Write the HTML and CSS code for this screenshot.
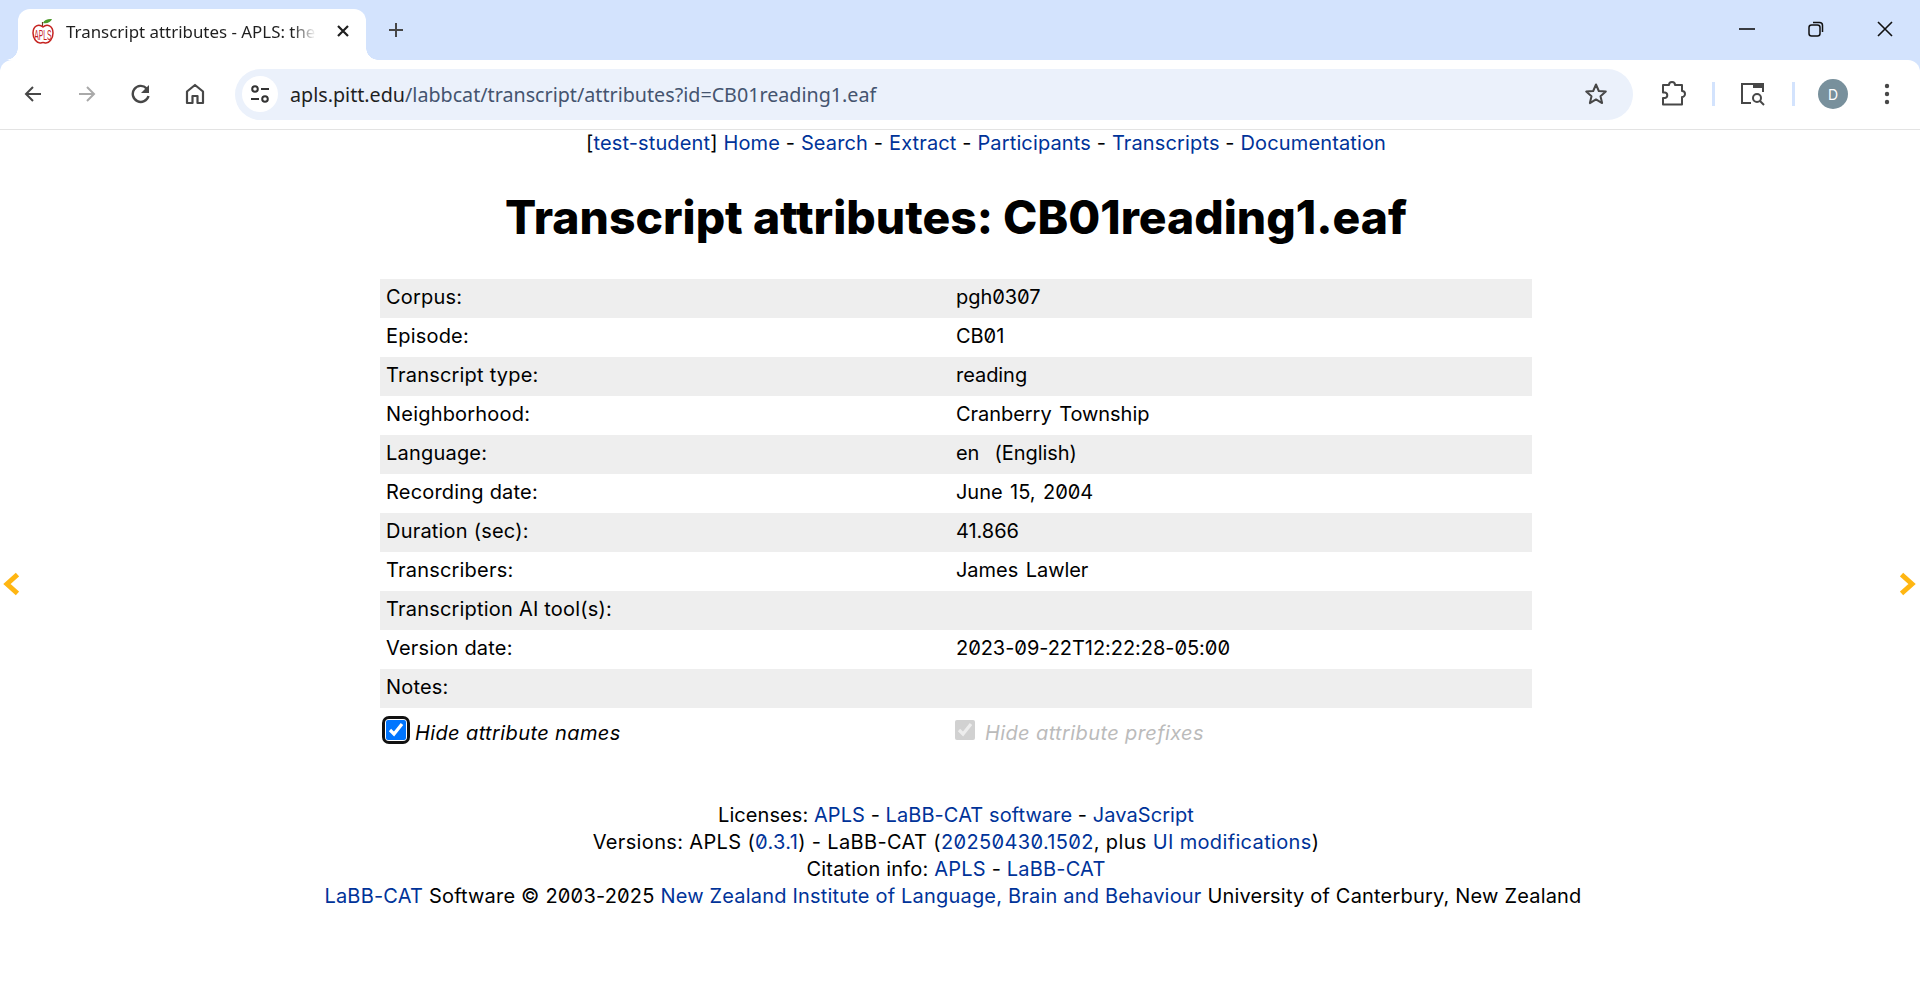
FILE: index.html
```html
<!DOCTYPE html>
<html lang="en">
<head>
    <meta charset="UTF-8">
    <title>Transcript attributes - APLS</title>
    <link rel="stylesheet" href="styles.css">
</head>
<body>
    <div class="tabstrip">
        <div class="tab">
            <svg class="favicon" width="24" height="26" viewBox="0 0 24 26" fill="none">
                <path d="M12 9C8 5.500 2 7.500 2 15c0 6 4 10 7 10 1.300 0 2-.5 3-.5s1.700.5 3 .5c3 0 7-4 7-10 0-7.500-6-9.500-10-6z" stroke="#c5221f" stroke-width="1.500"/>
                <text class="favicon-text" x="17.600" y="15.700" text-anchor="middle" transform="scale(.68 1.4)">APLS</text>
                <path d="M11.500 8V4" stroke="#6b3d1e" stroke-width="1.200"/>
                <path d="M12 5c1-3 5-4.500 9-4-1 3-5 5-9 4z" fill="#4c9a2a"/>
            </svg>
            <span class="tab-title">Transcript attributes - APLS: the</span>
            <svg class="tab-close" width="14" height="14" viewBox="0 0 14 14"><path d="M2 2l10 10M12 2L2 12" stroke="#1f1f1f" stroke-width="2.200"/></svg>
        </div>
        <svg class="new-tab" width="18" height="18" viewBox="0 0 18 18"><path d="M9 2v14M2 9h14" stroke="#474747" stroke-width="2"/></svg>
        <div class="window-controls">
            <svg width="16" height="16" viewBox="0 0 16 16"><path d="M0 8h16" stroke="#111" stroke-width="1.600"/></svg>
            <svg width="16" height="16" viewBox="0 0 16 16" fill="none"><rect x="1" y="4" width="11" height="11" rx="2.500" stroke="#111" stroke-width="1.500"/><path d="M5 1.500h6.500A3 3 0 0 1 14.500 4.500V11" stroke="#111" stroke-width="1.500"/></svg>
            <svg width="16" height="16" viewBox="0 0 16 16"><path d="M1 1l14 14M15 1L1 15" stroke="#111" stroke-width="1.600"/></svg>
        </div>
    </div>
    <div class="toolbar">
        <div class="nav-buttons">
            <svg width="20" height="20" viewBox="0 0 20 20" fill="none"><path d="M18 10H3M10 3l-7 7 7 7" stroke="#474747" stroke-width="2"/></svg>
            <svg width="20" height="20" viewBox="0 0 20 20" fill="none"><path d="M2 10h15M10 3l7 7-7 7" stroke="#a9a9a9" stroke-width="2"/></svg>
            <svg width="20" height="20" viewBox="0 0 20 20" fill="none"><path d="M17.500 12A8 8 0 1 1 15.500 4.300" stroke="#474747" stroke-width="2.400"/><path d="M18 1v8h-8z" fill="#474747"/></svg>
            <svg width="20" height="22" viewBox="0 0 20 22" fill="none"><path d="M2 20V8.500L10 2l8 6.500V20h-5.500v-7h-5v7z" stroke="#474747" stroke-width="2.200" stroke-linejoin="round"/></svg>
        </div>
        <div class="omnibox">
            <span class="site-info">
                <svg width="20" height="18" viewBox="0 0 20 18" fill="none"><circle cx="5" cy="4" r="2.800" stroke="#333" stroke-width="2"/><path d="M11 4h8M1 14h8" stroke="#333" stroke-width="2"/><circle cx="15" cy="14" r="2.800" stroke="#333" stroke-width="2"/></svg>
            </span>
            <span class="url"><span class="url-host">apls.pitt.edu</span>/labbcat/transcript/attributes?id=CB01reading1.eaf</span>
            <svg class="star" width="24" height="24" viewBox="0 0 24 24" fill="none"><path d="M12 2.500l2.800 6.500 7 .6-5.300 4.600 1.600 6.900-6.100-3.700-6.100 3.700 1.600-6.900-5.300-4.600 7-.6z" stroke="#474747" stroke-width="2" stroke-linejoin="round"/></svg>
        </div>
        <div class="toolbar-right">
            <svg class="ext" width="26" height="26" viewBox="0 0 26 26" fill="none"><path d="M3 3.500h6a3 3 0 0 1 6 0h7v6a3 3 0 0 1 0 6v7.500H3v-6.500h2a2.800 2.800 0 0 0 0-5.500H3z" transform="translate(0 .5)" stroke="#474747" stroke-width="2" stroke-linejoin="round"/></svg>
            <span class="divider"></span>
            <svg class="lens" width="26" height="26" viewBox="0 0 26 26" fill="none"><path d="M11 22H2V3h21v8" stroke="#474747" stroke-width="2"/><rect x="13" y="2" width="11" height="5" fill="#474747"/><circle cx="17" cy="17" r="4" stroke="#474747" stroke-width="2"/><path d="M20 20l4 4" stroke="#474747" stroke-width="2"/></svg>
            <span class="divider"></span>
            <span class="avatar">D</span>
            <svg class="menu" width="6" height="22" viewBox="0 0 6 22"><circle cx="3" cy="3" r="2.200" fill="#474747"/><circle cx="3" cy="11" r="2.200" fill="#474747"/><circle cx="3" cy="19" r="2.200" fill="#474747"/></svg>
        </div>
    </div>

    <div class="page">
        <div class="side-arrow left"><svg width="16" height="24" viewBox="0 0 16 24"><path d="M14.500 2.500L4 12l10.500 9.500" fill="none" stroke="#ffb612" stroke-width="5"/></svg></div>
        <div class="side-arrow right"><svg width="16" height="24" viewBox="0 0 16 24"><path d="M1.500 2.500L12 12 1.500 21.500" fill="none" stroke="#ffb612" stroke-width="5"/></svg></div>

        <nav class="top-links">
            [<a href="#">test-student</a>] <a href="#">Home</a> - <a href="#">Search</a> - <a href="#">Extract</a> - <a href="#">Participants</a> - <a href="#">Transcripts</a> - <a href="#">Documentation</a>
        </nav>
        <h1>Transcript attributes: CB01reading1.eaf</h1>

        <table class="attributes">
            <tr><td>Corpus:</td><td>pgh0307</td></tr>
            <tr><td>Episode:</td><td>CB01</td></tr>
            <tr><td>Transcript type:</td><td>reading</td></tr>
            <tr><td>Neighborhood:</td><td>Cranberry Township</td></tr>
            <tr><td>Language:</td><td>en &nbsp;(English)</td></tr>
            <tr><td>Recording date:</td><td>June 15, 2004</td></tr>
            <tr><td>Duration (sec):</td><td>41.866</td></tr>
            <tr><td>Transcribers:</td><td>James Lawler</td></tr>
            <tr><td>Transcription AI tool(s):</td><td></td></tr>
            <tr><td>Version date:</td><td>2023-09-22T12:22:28-05:00</td></tr>
            <tr><td>Notes:</td><td></td></tr>
        </table>

        <div class="options">
            <label class="option first"><span class="focus-ring"><input type="checkbox" checked></span> Hide attribute names</label>
            <label class="option disabled"><input type="checkbox" checked disabled> Hide attribute prefixes</label>
        </div>

        <footer>
            <div>Licenses: <a href="#">APLS</a> - <a href="#">LaBB-CAT software</a> - <a href="#">JavaScript</a></div>
            <div>Versions: APLS (<a href="#">0.3.1</a>) - LaBB-CAT (<a href="#">20250430.1502</a>, plus <a href="#">UI modifications</a>)</div>
            <div>Citation info: <a href="#">APLS</a> - <a href="#">LaBB-CAT</a></div>
            <div><a href="#">LaBB-CAT</a> Software © 2003-2025 <a href="#">New Zealand Institute of Language, Brain and Behaviour</a> University of Canterbury, New Zealand</div>
        </footer>
    </div>
</body>
</html>
```

FILE: styles.css
```css
* {
    box-sizing: border-box;
}
body {
    margin: 0;
    height: 1008px;
    overflow: hidden;
    background-color: #d3e3fd;
    font-family: Inter, "Liberation Sans", sans-serif;
    font-feature-settings: "zero";
    color: #000;
}
a {
    color: #003399;
    text-decoration: none;
}

/* browser chrome */
.tabstrip {
    display: flex;
    align-items: flex-start;
    height: 60px;
    font-family: "Noto Sans", sans-serif;
    font-feature-settings: normal;
}
.tab {
    position: relative;
    display: flex;
    align-items: center;
    width: 348px;
    height: 51px;
    margin: 9px 0 0 18px;
    padding: 0 16px 7px 13px;
    background-color: #fff;
    border-radius: 12px 12px 0 0;
}
.tab::before,
.tab::after {
    content: "";
    position: absolute;
    bottom: 0;
    width: 12px;
    height: 12px;
}
.tab::before {
    left: -12px;
    background: radial-gradient(circle at 0 0, transparent 11.500px, #fff 12px);
}
.tab::after {
    right: -12px;
    background: radial-gradient(circle at 100% 0, transparent 11.500px, #fff 12px);
}
.favicon {
    flex: none;
    margin-right: 11px;
    overflow: visible;
}
.favicon-text {
    font-family: "Liberation Sans", sans-serif;
    font-size: 10px;
    fill: #c5221f;
}
.tab-title {
    flex: 1;
    overflow: hidden;
    white-space: nowrap;
    font-size: 16.900px;
    color: #1f1f1f;
    -webkit-mask-image: linear-gradient(to left, transparent, #000 24px);
}
.tab-close {
    flex: none;
    margin-left: 20px;
}
.new-tab {
    margin: 21px 0 0 21px;
}
.window-controls {
    display: flex;
    gap: 53px;
    margin: 21px 27px 0 auto;
}
.toolbar {
    position: relative;
    display: flex;
    align-items: center;
    height: 70px;
    padding: 0 0 1px 23px;
    background-color: #fff;
    border-bottom: 1px solid #e3e3e3;
    border-radius: 12px 12px 0 0;
}
.nav-buttons {
    display: flex;
    align-items: center;
    gap: 34px;
    margin-right: 30px;
}
.omnibox {
    display: flex;
    align-items: center;
    width: 1398px;
    height: 51px;
    padding: 0 25px 0 7px;
    background-color: #ebf1fb;
    border-radius: 26px;
    font-family: "Noto Sans", sans-serif;
    font-feature-settings: normal;
}
.site-info {
    display: flex;
    align-items: center;
    justify-content: center;
    width: 36px;
    height: 36px;
    margin-right: 12px;
    background-color: #fff;
    border-radius: 50%;
}
.url {
    flex: 1;
    font-size: 19.700px;
    color: #44546f;
    white-space: nowrap;
}
.url-host {
    color: #1f1f1f;
}
.toolbar-right {
    display: flex;
    align-items: center;
    margin-left: 27px;
}
.divider {
    width: 3px;
    height: 24px;
    margin: 0 25.500px;
    background-color: #d3e3fd;
}
.avatar {
    display: flex;
    align-items: center;
    justify-content: center;
    width: 30px;
    height: 30px;
    margin-left: -2px;
    background-color: #78909c;
    border-radius: 50%;
    color: #fff;
    font-size: 14px;
}
.menu {
    margin-left: 36px;
}

/* page */
.page {
    position: relative;
    height: 878px;
    background-color: #fff;
    font-size: 20px;
}
.side-arrow {
    position: absolute;
    top: 442px;
    line-height: 0;
}
.side-arrow.left {
    left: 3px;
}
.side-arrow.right {
    right: 4px;
}
.top-links {
    padding-left: 52px;
    line-height: 27px;
    text-align: center;
    letter-spacing: 0.14px;
}
h1 {
    margin: 29.500px 0 0;
    padding-right: 8px;
    font-size: 46.250px;
    line-height: 60px;
    font-weight: 800;
    text-align: center;
    font-feature-settings: normal;
}
.attributes {
    width: 1152px;
    margin: 32px 0 0 380px;
    border-collapse: collapse;
    table-layout: fixed;
}
.attributes td {
    height: 39px;
    padding: 0 6px 2px;
    line-height: 27px;
    letter-spacing: -0.05px;
    word-spacing: 2px;
}
.attributes td:first-child {
    width: 570px;
    letter-spacing: 0.2px;
    word-spacing: 0;
}
.attributes tr:nth-child(odd) {
    background-color: #eee;
}
.options {
    display: grid;
    grid-template-columns: 570px 1fr;
    width: 1152px;
    margin: 8px 0 0 380px;
    font-style: italic;
    line-height: 27px;
    letter-spacing: 0.38px;
}
.option {
    display: flex;
    align-items: center;
    gap: 10px;
    padding-left: 5px;
}
.option input {
    display: block;
    width: 20px;
    height: 20px;
    margin: 0;
    accent-color: #0075ff;
}
.option > input {
    margin-bottom: 7px;
}
.option.first {
    gap: 5px;
    padding-left: 2px;
}
.focus-ring {
    padding: 1px;
    margin-bottom: 7px;
    border: 3px solid #111;
    border-radius: 7px;
}
.option.disabled {
    color: #bbb;
}
footer {
    margin-top: 51px;
    padding-right: 8px;
    line-height: 27px;
    text-align: center;
    letter-spacing: 0.19px;
}
footer div:nth-child(1) {
    letter-spacing: 0.07px;
}
footer div:nth-child(2) {
    letter-spacing: 0.35px;
}
footer div:nth-child(4) {
    padding-right: 6px;
}
```
